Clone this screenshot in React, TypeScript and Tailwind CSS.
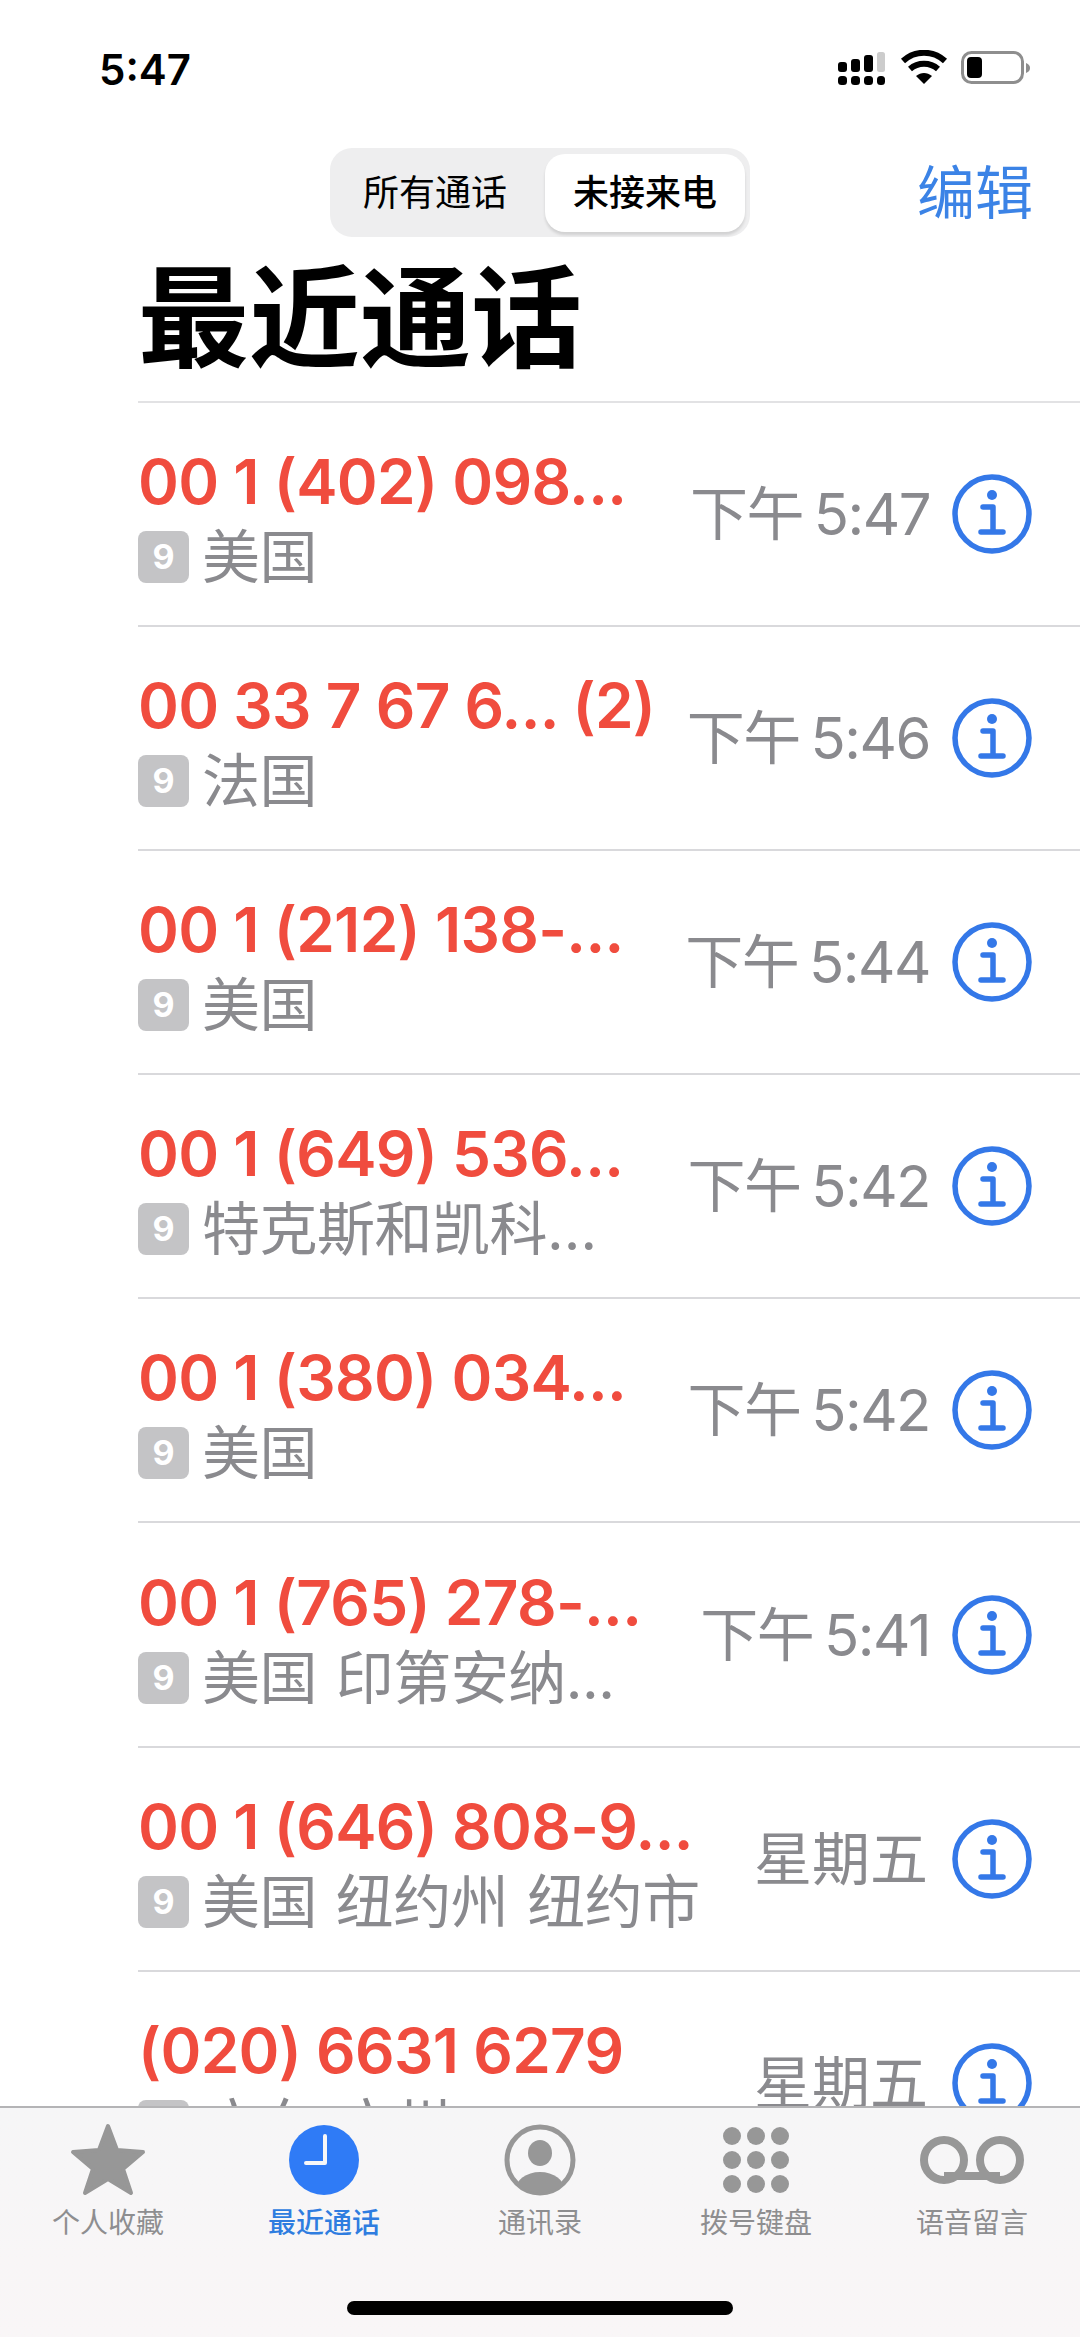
const FONT = "font-['Inter','Noto_Sans_CJK_SC',sans-serif]";

const calls = [
  { number: "00 1 (402) 098...", place: "美国", time: "下午 5:47" },
  { number: "00 33 7 67 6... (2)", place: "法国", time: "下午 5:46" },
  { number: "00 1 (212) 138-...", place: "美国", time: "下午 5:44" },
  { number: "00 1 (649) 536...", place: "特克斯和凯科…", time: "下午 5:42" },
  { number: "00 1 (380) 034...", place: "美国", time: "下午 5:42" },
  { number: "00 1 (765) 278-...", place: "美国 印第安纳...", time: "下午 5:41" },
  { number: "00 1 (646) 808-9...", place: "美国 纽约州 纽约市", time: "星期五" },
  { number: "(020) 6631 6279", place: "广东 广州", time: "星期五" },
];

function StatusIcons() {
  return (
    <svg width="194" height="36" viewBox="0 0 194 36" className="block">
      <g fill="#000">
        <rect x="1" y="12" width="9" height="10" rx="3" />
        <rect x="14" y="9" width="9" height="13" rx="3" />
        <rect x="27" y="5" width="9" height="17" rx="3" />
        <rect x="40" y="2" width="8" height="20" rx="2.5" fill="#cccccc" />
        <rect x="1" y="26" width="9" height="9" rx="3.5" />
        <rect x="14" y="26" width="9" height="9" rx="3.5" />
        <rect x="27" y="26" width="9" height="9" rx="3.5" />
        <rect x="40" y="26" width="8" height="9" rx="3.5" />
      </g>
      <g fill="none" stroke="#000" strokeWidth="6">
        <path d="M66 11 C78 0 96 0 108 11" />
        <path d="M73 19 C81 12 93 12 101 19" />
      </g>
      <path d="M79 26 C84 22 90 22 95 26 L87 34 Z" fill="#000" />
      <rect x="125.5" y="2.5" width="60" height="30" rx="9" fill="none" stroke="#8e8e8e" strokeWidth="3" />
      <rect x="130" y="7" width="15" height="21" rx="4" fill="#000" />
      <path d="M189 13 C192 14 193 16 193 18 C193 20 192 22 189 23 Z" fill="#8e8e8e" />
    </svg>
  );
}

function InfoIcon() {
  return (
    <svg width="80" height="80" viewBox="0 0 80 80" className="block shrink-0">
      <circle cx="40" cy="40" r="37" fill="none" stroke="#3478e8" strokeWidth="5.5" />
      <circle cx="40" cy="21" r="5" fill="#3478e8" />
      <path d="M31 33 H41 V58 M29 58 H51" fill="none" stroke="#3478e8" strokeWidth="5.5" strokeLinecap="round" strokeLinejoin="round" />
    </svg>
  );
}

function CallRow({ number, place, time }: { number: string; place: string; time: string }) {
  const isClock = time.includes(":");
  return (
    <div className="flex h-[224.2px] shrink-0 items-center border-b-2 border-[#d9d9dc] pr-[48px]">
      <div className="min-w-0 flex-1 pt-[10px]">
        <div className="whitespace-nowrap text-[62px] leading-[68px] font-semibold tracking-[-0.7px] text-[#f04c3e]">{number}</div>
        <div className="mt-[8px] flex items-center gap-[13px]">
          <span className="flex h-[52px] w-[51px] items-center justify-center rounded-[8px] bg-[#c4c4c6] text-[34px] leading-none font-bold text-white">9</span>
          <span className="whitespace-nowrap text-[58px] leading-[66px] tracking-[-0.5px] [word-spacing:3px] text-[#8a8a8e]">{place}</span>
        </div>
      </div>
      <span className={`whitespace-nowrap text-[58px] leading-none text-[#8a8a8e] ${isClock ? "mr-[22px] tracking-[-1.5px] [word-spacing:-4px]" : "mr-[24px]"}`}>{time}</span>
      <InfoIcon />
    </div>
  );
}

function TabIcon({ name }: { name: string }) {
  if (name === "star") {
    return (
      <svg width="78" height="74" viewBox="0 0 78 74">
        <path d="M39 3 L48 27 L74 29 L54 46 L62 70 L39 56 L16 70 L24 46 L4 29 L30 27 Z" fill="#979797" stroke="#979797" strokeWidth="4" strokeLinejoin="round" />
      </svg>
    );
  }
  if (name === "clock") {
    return (
      <svg width="70" height="70" viewBox="0 0 70 70">
        <circle cx="35" cy="35" r="35" fill="#2f7bf6" />
        <path d="M36 11 V38 H17" fill="none" stroke="#f7f7f8" strokeWidth="4" strokeLinecap="round" strokeLinejoin="round" />
      </svg>
    );
  }
  if (name === "contact") {
    return (
      <svg width="72" height="72" viewBox="0 0 72 72">
        <defs>
          <clipPath id="contact-clip">
            <circle cx="36" cy="36" r="33" />
          </clipPath>
        </defs>
        <circle cx="36" cy="36" r="33" fill="none" stroke="#979797" strokeWidth="5" />
        <ellipse cx="36" cy="29" rx="12" ry="13" fill="#979797" />
        <ellipse cx="36" cy="67" rx="25" ry="19" fill="#979797" clipPath="url(#contact-clip)" />
      </svg>
    );
  }
  if (name === "keypad") {
    return (
      <div className="grid grid-cols-3 gap-[6px]">
        {Array.from({ length: 9 }).map((_, i) => (
          <span key={i} className="h-[18px] w-[18px] rounded-full bg-[#979797]" />
        ))}
      </div>
    );
  }
  return (
    <svg width="104" height="48" viewBox="0 0 104 48">
      <g fill="none" stroke="#979797" strokeWidth="8">
        <circle cx="24" cy="24" r="20" />
        <circle cx="80" cy="24" r="20" />
      </g>
      <rect x="24" y="36" width="56" height="8" fill="#979797" />
    </svg>
  );
}

const tabs = [
  { icon: "star", label: "个人收藏" },
  { icon: "clock", label: "最近通话", active: true },
  { icon: "contact", label: "通讯录" },
  { icon: "keypad", label: "拨号键盘" },
  { icon: "voicemail", label: "语音留言" },
];

export default function App() {
  return (
    <div className={`flex h-[2337px] w-[1080px] flex-col overflow-hidden bg-white ${FONT}`}>
      <div className="flex h-[148px] shrink-0 items-start justify-between pt-[46px] pr-[49px] pl-[99px]">
        <span className="text-[42px] leading-[48px] font-semibold text-black">5:47</span>
        <div className="pt-[4px]"><StatusIcons /></div>
      </div>

      <div className="grid shrink-0 grid-cols-[1fr_auto_1fr] items-center">
        <div />
        <div className="flex h-[89px] w-[420px] items-center rounded-[22px] bg-[#eeeeef] p-[5px]">
          <span className="flex-1 pr-[10px] text-center text-[36px] leading-none text-black">所有通话</span>
          <span className="flex h-[78px] w-[200px] items-center justify-center rounded-[20px] bg-white text-[36px] leading-none font-medium text-black shadow-[0_3px_3px_rgba(0,0,0,0.12)]">未接来电</span>
        </div>
        <span className="mr-[47px] justify-self-end text-[58px] leading-none text-[#3b83e6]">编辑</span>
      </div>

      <div className="ml-[138px] flex h-[165.5px] shrink-0 items-center border-b-2 border-[#e2e2e4]">
        <h1 className="text-[111px] leading-none font-bold text-black">最近通话</h1>
      </div>

      <div className="ml-[138px] flex min-h-0 flex-1 flex-col overflow-hidden">
        {calls.map((c) => (
          <CallRow key={c.number} number={c.number} place={c.place} time={c.time} />
        ))}
      </div>

      <div className="flex h-[231px] shrink-0 flex-col border-t-2 border-[#b4b4b6] bg-gradient-to-b from-[#f6f6f7] to-[#f9f6f7]">
        <div className="grid grid-cols-5 pt-[14px]">
          {tabs.map((t) => (
            <div key={t.label} className="flex flex-col items-center">
              <div className="flex h-[76px] items-center justify-center"><TabIcon name={t.icon} /></div>
              <span className={`mt-[9px] text-[28px] leading-[32px] ${t.active ? "font-medium text-[#2f7de0]" : "text-[#8e8e90]"}`}>{t.label}</span>
            </div>
          ))}
        </div>
        <div className="mt-auto mb-[22px] h-[14px] w-[386px] self-center rounded-full bg-black" />
      </div>
    </div>
  );
}
